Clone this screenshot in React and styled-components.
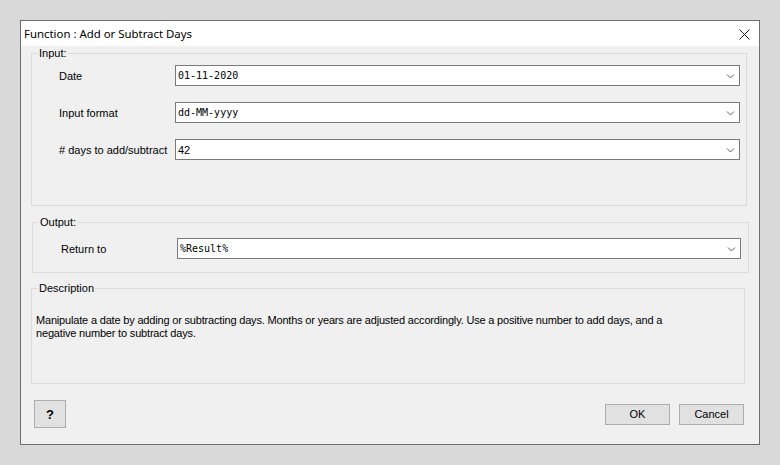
import React from "react";
import styled, { createGlobalStyle } from "styled-components";

const GlobalStyle = createGlobalStyle`
    html, body {
        margin: 0;
        padding: 0;
        background: #d9d9d9;
    }
    * {
        box-sizing: border-box;
    }
`

const Chevron = () => (
    <svg width="9" height="6" viewBox="0 0 9 6">
        <path d="M1 1.5 L4.5 5 L8 1.5" fill="none" stroke="#5f5f5f" strokeWidth="1" />
    </svg>
)

const CloseIcon = () => (
    <svg width="11" height="11" viewBox="0 0 11 11">
        <path d="M0.5 0.5 L10.5 10.5 M10.5 0.5 L0.5 10.5" stroke="#1a1a1a" strokeWidth="1" />
    </svg>
)

const Combo = ({ value, mono = true }) => (
    <ComboBox>
        <ComboText $mono={mono}>{value}</ComboText>
        <ComboArrow><Chevron /></ComboArrow>
    </ComboBox>
)

const App = () => {
    return (
        <>
        <GlobalStyle />
        <Page>
            <Window>
                <TitleBar>
                    <Title>Function : Add or Subtract Days</Title>
                    <CloseButton><CloseIcon /></CloseButton>
                </TitleBar>
                <Group $ml={10} $mr={12} $mt={0}>
                    <Legend>Input:</Legend>
                    <Rows $pl={27} $pr={6} $pt={5} $pb={45} $gap={16}>
                        <Row>
                            <Label>Date</Label>
                            <Combo value="01-11-2020" />
                        </Row>
                        <Row>
                            <Label>Input format</Label>
                            <Combo value="dd-MM-yyyy" />
                        </Row>
                        <Row>
                            <Label># days to add/subtract</Label>
                            <Combo value="42" mono={false} />
                        </Row>
                    </Rows>
                </Group>
                <Group $ml={11} $mr={10} $mt={9}>
                    <Legend>Output:</Legend>
                    <Rows $pl={28} $pr={7} $pt={9} $pb={13} $gap={16}>
                        <Row>
                            <Label>Return to</Label>
                            <Combo value="%Result%" />
                        </Row>
                    </Rows>
                </Group>
                <Group $ml={10} $mr={14} $mt={8}>
                    <Legend>Description</Legend>
                    <DescriptionText>
                        Manipulate a date by adding or subtracting days. Months or years are adjusted accordingly. Use a positive number to add days, and a negative number to subtract days.
                    </DescriptionText>
                </Group>
                <Footer>
                    <HelpButton>?</HelpButton>
                    <ButtonRow>
                        <Button>OK</Button>
                        <Button>Cancel</Button>
                    </ButtonRow>
                </Footer>
            </Window>
        </Page>
        </>
    );
}

const Page = styled.div`
    width: 780px;
    height: 465px;
    padding: 20px 0 0 20px;
`
const Window = styled.div`
    width: 740px;
    height: 425px;
    border: 1px solid #6e6e6e;
    background: #f0f0f0;
    display: flex;
    flex-direction: column;
    font-family: "Liberation Sans", Arial, sans-serif;
    font-size: 11px;
    color: #000;
`
const TitleBar = styled.div`
    height: 25px;
    background: #fff;
    display: flex;
    align-items: center;
    justify-content: space-between;
    padding: 0 9px 0 3px;
`
const Title = styled.div`
    font-family: "Noto Sans", "Open Sans", sans-serif;
    font-size: 11.4px;
    color: #000;
`
const CloseButton = styled.div`
    display: flex;
    align-items: center;
    padding-top: 1px;
`
const Group = styled.fieldset`
    margin: ${p => p.$mt}px ${p => p.$mr}px 0 ${p => p.$ml}px;
    padding: 0;
    border: 1px solid #dcdcdc;
    min-inline-size: 0;
`
const Legend = styled.legend`
    margin-left: 6px;
    padding: 0 1px;
    font-size: 11px;
    line-height: 14px;
    color: #000;
`
const Rows = styled.div`
    display: flex;
    flex-direction: column;
    gap: ${p => p.$gap}px;
    padding: ${p => p.$pt}px ${p => p.$pr}px ${p => p.$pb}px ${p => p.$pl}px;
`
const Row = styled.div`
    display: flex;
    align-items: center;
`
const Label = styled.div`
    width: 116px;
    flex-shrink: 0;
    white-space: nowrap;
`
const ComboBox = styled.div`
    flex: 1;
    height: 21px;
    background: #fff;
    border: 1px solid #7a7a7a;
    display: flex;
    align-items: center;
    justify-content: space-between;
    padding: 0 4px 0 2px;
`
const ComboText = styled.span`
    font-family: ${p => p.$mono ? `"DejaVu Sans Mono", "Liberation Mono", monospace` : `"Liberation Sans", Arial, sans-serif`};
    font-size: ${p => p.$mono ? "10px" : "11px"};
    color: #000;
`
const ComboArrow = styled.span`
    display: flex;
    align-items: center;
`
const DescriptionText = styled.p`
    margin: 0;
    padding: 19px 40px 41px 4px;
    line-height: 13px;
    letter-spacing: -0.18px;
    height: 88px;
`
const Footer = styled.div`
    flex: 1;
    display: flex;
    align-items: center;
    justify-content: space-between;
    padding: 0 15px 0 13px;
`
const HelpButton = styled.button`
    width: 32px;
    height: 28px;
    border: 1px solid #adadad;
    background: #e1e1e1;
    font-family: "Liberation Sans", Arial, sans-serif;
    font-weight: bold;
    font-size: 13px;
    padding: 0;
    color: #000;
`
const ButtonRow = styled.div`
    display: flex;
    gap: 9px;
`
const Button = styled.button`
    width: 65px;
    height: 21px;
    border: 1px solid #adadad;
    background: #e1e1e1;
    font-family: "Liberation Sans", Arial, sans-serif;
    font-size: 11px;
    padding: 0;
    color: #000;
`

export default App;
